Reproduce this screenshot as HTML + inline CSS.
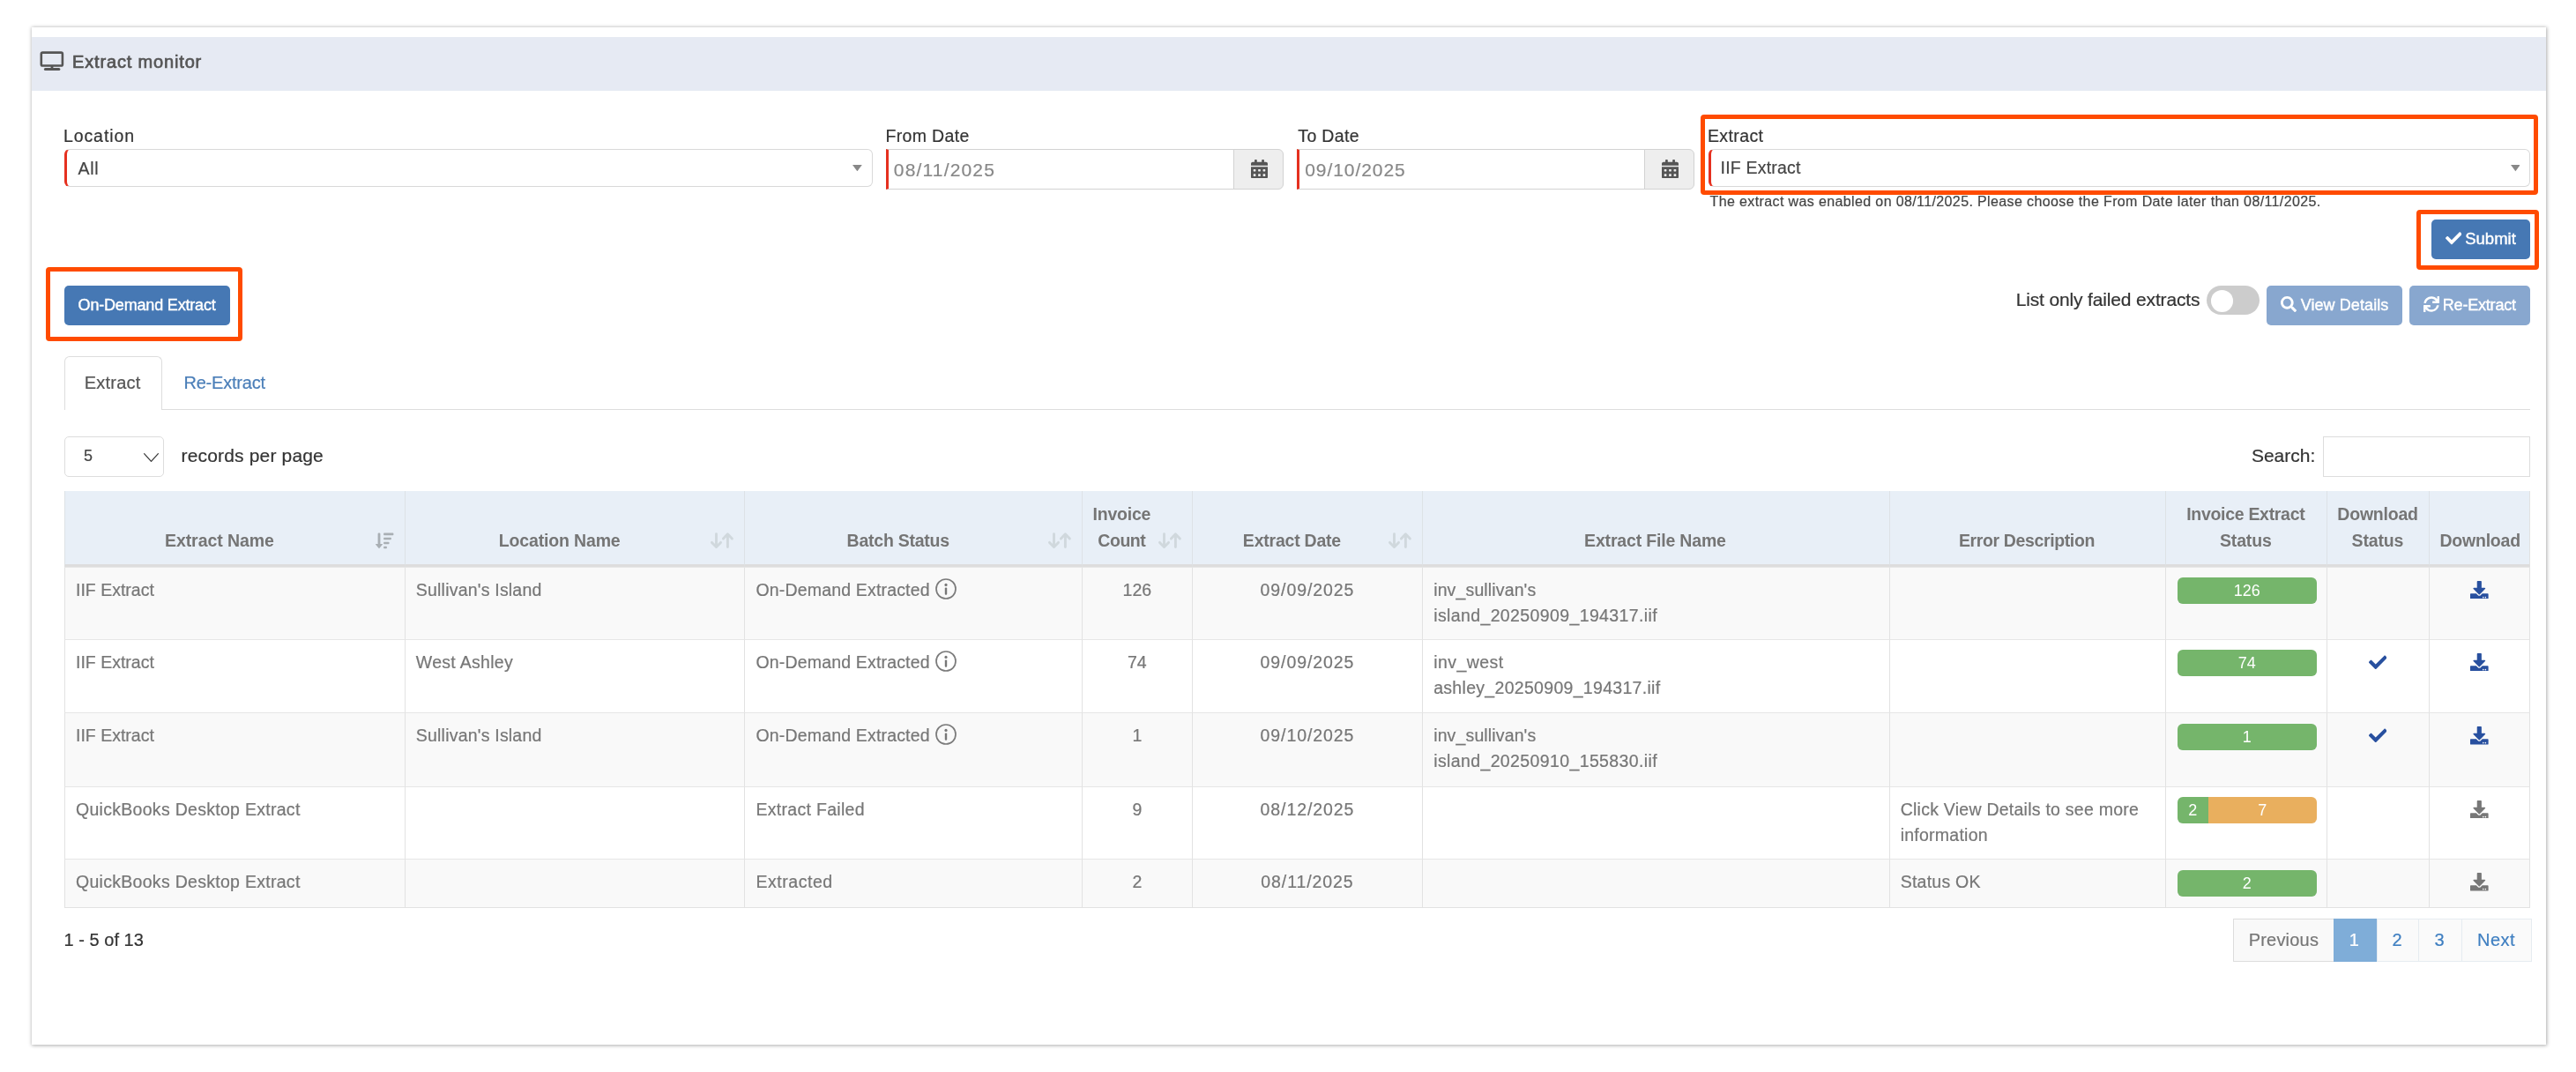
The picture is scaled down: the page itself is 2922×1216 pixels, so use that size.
<!DOCTYPE html>
<html><head><meta charset="utf-8"><title>Extract monitor</title>
<style>
html,body{margin:0;padding:0;background:#fff;}
body{will-change:transform;width:2922px;height:1216px;position:relative;overflow:hidden;font-family:"Liberation Sans",sans-serif;}
.b{position:absolute;box-sizing:border-box;display:block;}
.t{position:absolute;white-space:nowrap;}
table{position:absolute;border-collapse:separate;border-spacing:0;table-layout:fixed;font-size:19.5px;line-height:29px;color:#777;}
th,td{box-sizing:border-box;padding:11px 12px;border-left:1.5px solid #e2e2e2;border-top:1.5px solid #e6e6e6;vertical-align:top;text-align:left;overflow:hidden;position:relative;}
th{background:#e8eff7;vertical-align:bottom;line-height:29.5px;padding-bottom:11.7px;text-align:center;font-weight:bold;border-top:none;border-bottom:3px solid #ddd;border-left-color:#dde2e6;color:#757575;}
th{padding-left:11px;padding-right:13px;}
th.s{padding-right:46px;}
td.d{letter-spacing:0.9px;}
td.e{letter-spacing:0.25px;}
tr.o td{background:#f9f9f9;}
td.c{text-align:center;}
td{-webkit-text-stroke:0.22px #777;}
.pg{-webkit-text-stroke:0;}
th:last-child,td:last-child{border-right:1.5px solid #e2e2e2;}
tr:last-child td{border-bottom:1.5px solid #e2e2e2;}
.pg{position:absolute;left:12.5px;top:11.6px;height:30px;border-radius:6px;overflow:hidden;display:flex;color:#fff;font-size:18px;line-height:30px;text-align:center;box-shadow:inset 0 -1.5px 0 rgba(0,0,0,.12);}
.pg span{display:block;height:30px;}
.g{background:#75b56b;}.w{background:#e9af5e;}

tr.r1 .pg{top:10.8px;}

</style></head>
<body>
<div class="b " style="left:36.0px;top:31.0px;width:2852.0px;height:1153.5px;background:#fff;box-shadow:0 0 4px 0.5px rgba(0,0,0,.33);"></div>
<div class="b " style="left:36.0px;top:42.0px;width:2852.0px;height:61.3px;background:#e6eaf3;"></div>
<svg class="b" style="left:44.0px;top:57.0px;" width="30.0" height="25.0" viewBox="0 0 30 25"><rect x="2.8" y="2.6" width="24.1" height="14.9" rx="1.6" ry="1.6" fill="none" stroke="#555" stroke-width="2.6"/><rect x="13.6" y="18" width="2.8" height="3" fill="#555"/><rect x="5.9" y="20" width="18.5" height="3.1" rx="1.5" fill="#555"/></svg>
<div class="t " style="left:82.1px;top:60.1px;font-size:20px;line-height:20px;color:#555;letter-spacing:0.836px;-webkit-text-stroke:0.7px #555;">Extract monitor</div>
<div class="t " style="left:71.9px;top:144.7px;font-size:19.5px;line-height:19.5px;color:#333;letter-spacing:0.931px;-webkit-text-stroke:0.2px #333;">Location</div>
<div class="t " style="left:1004.4px;top:144.7px;font-size:19.5px;line-height:19.5px;color:#333;letter-spacing:0.350px;-webkit-text-stroke:0.2px #333;">From Date</div>
<div class="t " style="left:1472.3px;top:144.7px;font-size:19.5px;line-height:19.5px;color:#333;letter-spacing:0.332px;-webkit-text-stroke:0.2px #333;">To Date</div>
<div class="t " style="left:1936.9px;top:144.7px;font-size:19.5px;line-height:19.5px;color:#333;letter-spacing:0.402px;-webkit-text-stroke:0.2px #333;">Extract</div>
<div class="b " style="left:73.0px;top:169.2px;width:916.7px;height:42.7px;background:#fff;border:1.5px solid #d9d9d9;border-left:3px solid #e5301f;border-radius:6px;"></div>
<div class="t " style="left:88.6px;top:181.5px;font-size:19.5px;line-height:19.5px;color:#444;letter-spacing:0.612px;-webkit-text-stroke:0.2px #444;">All</div>
<svg class="b" style="left:967.4px;top:187.1px;" width="10.8" height="7.3" viewBox="0 0 10.8 7.3"><path d="M0 0h10.800L5.400 7.300z" fill="#888"/></svg>
<div class="b " style="left:1005.0px;top:169.2px;width:395.3px;height:45.5px;background:#fff;border-top:1.5px solid #d2d2d2;border-bottom:1.5px solid #d2d2d2;border-left:3px solid #e5301f;"></div>
<div class="b " style="left:1399.3px;top:169.2px;width:56.8px;height:45.5px;background:#eee;border:1.5px solid #d2d2d2;border-radius:0 6px 6px 0;"></div>
<svg class="b" style="left:1418.7px;top:180.6px;" width="19.0" height="21.8" viewBox="0 0 448 512"><path fill="#555" d="M0 464c0 26.500 21.500 48 48 48h352c26.500 0 48-21.500 48-48V192H0v272zm320-196c0-6.600 5.400-12 12-12h40c6.600 0 12 5.400 12 12v40c0 6.600-5.400 12-12 12h-40c-6.600 0-12-5.400-12-12v-40zm0 128c0-6.600 5.400-12 12-12h40c6.600 0 12 5.400 12 12v40c0 6.600-5.400 12-12 12h-40c-6.600 0-12-5.400-12-12v-40zM192 268c0-6.600 5.400-12 12-12h40c6.600 0 12 5.400 12 12v40c0 6.600-5.400 12-12 12h-40c-6.600 0-12-5.400-12-12v-40zm0 128c0-6.600 5.400-12 12-12h40c6.600 0 12 5.400 12 12v40c0 6.600-5.400 12-12 12h-40c-6.600 0-12-5.400-12-12v-40zM64 268c0-6.600 5.400-12 12-12h40c6.600 0 12 5.400 12 12v40c0 6.600-5.400 12-12 12H76c-6.600 0-12-5.400-12-12v-40zm0 128c0-6.600 5.400-12 12-12h40c6.600 0 12 5.400 12 12v40c0 6.600-5.400 12-12 12H76c-6.600 0-12-5.400-12-12v-40zM400 64h-48V16c0-8.800-7.200-16-16-16h-32c-8.800 0-16 7.200-16 16v48H160V16c0-8.800-7.200-16-16-16h-32c-8.800 0-16 7.200-16 16v48H48C21.500 64 0 85.500 0 112v48h448v-48c0-26.500-21.500-48-48-48z"/></svg>
<div class="t " style="left:1013.8px;top:182.2px;font-size:21px;line-height:21px;color:#888;letter-spacing:1.172px;-webkit-text-stroke:0.2px #888;">08/11/2025</div>
<div class="b " style="left:1471.3px;top:169.2px;width:394.7px;height:45.5px;background:#fff;border-top:1.5px solid #d2d2d2;border-bottom:1.5px solid #d2d2d2;border-left:3px solid #e5301f;"></div>
<div class="b " style="left:1865.0px;top:169.2px;width:57.0px;height:45.5px;background:#eee;border:1.5px solid #d2d2d2;border-radius:0 6px 6px 0;"></div>
<svg class="b" style="left:1884.5px;top:180.6px;" width="19.0" height="21.8" viewBox="0 0 448 512"><path fill="#555" d="M0 464c0 26.500 21.500 48 48 48h352c26.500 0 48-21.500 48-48V192H0v272zm320-196c0-6.600 5.400-12 12-12h40c6.600 0 12 5.400 12 12v40c0 6.600-5.400 12-12 12h-40c-6.600 0-12-5.400-12-12v-40zm0 128c0-6.600 5.400-12 12-12h40c6.600 0 12 5.400 12 12v40c0 6.600-5.400 12-12 12h-40c-6.600 0-12-5.400-12-12v-40zM192 268c0-6.600 5.400-12 12-12h40c6.600 0 12 5.400 12 12v40c0 6.600-5.400 12-12 12h-40c-6.600 0-12-5.400-12-12v-40zm0 128c0-6.600 5.400-12 12-12h40c6.600 0 12 5.400 12 12v40c0 6.600-5.400 12-12 12h-40c-6.600 0-12-5.400-12-12v-40zM64 268c0-6.600 5.400-12 12-12h40c6.600 0 12 5.400 12 12v40c0 6.600-5.400 12-12 12H76c-6.600 0-12-5.400-12-12v-40zm0 128c0-6.600 5.400-12 12-12h40c6.600 0 12 5.400 12 12v40c0 6.600-5.400 12-12 12H76c-6.600 0-12-5.400-12-12v-40zM400 64h-48V16c0-8.800-7.200-16-16-16h-32c-8.800 0-16 7.200-16 16v48H160V16c0-8.800-7.200-16-16-16h-32c-8.800 0-16 7.200-16 16v48H48C21.500 64 0 85.500 0 112v48h448v-48c0-26.500-21.500-48-48-48z"/></svg>
<div class="t " style="left:1480.2px;top:182.2px;font-size:21px;line-height:21px;color:#888;letter-spacing:0.941px;-webkit-text-stroke:0.2px #888;">09/10/2025</div>
<div class="b " style="left:1937.8px;top:169.0px;width:932.2px;height:42.8px;background:#fff;border:1.5px solid #d9d9d9;border-left:3px solid #e5301f;border-radius:6px;"></div>
<div class="t " style="left:1951.6px;top:181.1px;font-size:19.5px;line-height:19.5px;color:#444;letter-spacing:0.193px;-webkit-text-stroke:0.2px #444;">IIF Extract</div>
<svg class="b" style="left:2847.6px;top:187.4px;" width="10.8" height="7.3" viewBox="0 0 10.8 7.3"><path d="M0 0h10.800L5.400 7.300z" fill="#888"/></svg>
<div class="t " style="left:1939.5px;top:220.7px;font-size:16px;line-height:16px;color:#444;letter-spacing:0.379px;-webkit-text-stroke:0.2px #444;">The extract was enabled on 08/11/2025. Please choose the From Date later than 08/11/2025.</div>
<div class="b " style="left:1928.5px;top:130.4px;width:950.5px;height:90.9px;border:5px solid #ff4b00;border-radius:4px;"></div>
<div class="b " style="left:2741.3px;top:238.0px;width:139.2px;height:67.6px;border:5px solid #ff4b00;border-radius:4px;"></div>
<div class="b " style="left:52.0px;top:303.0px;width:223.0px;height:84.0px;border:5px solid #ff4b00;border-radius:4px;"></div>
<div class="b " style="left:2757.5px;top:249.2px;width:112.5px;height:45.1px;background:#4678b4;border-radius:5px;"></div>
<svg class="b" style="left:2773.8px;top:261.2px;" width="18.5" height="18.5" viewBox="0 0 512 512"><path fill="#fff" d="M173.898 439.404l-166.400-166.400c-9.997-9.997-9.997-26.206 0-36.204l36.203-36.204c9.997-9.998 26.207-9.998 36.204 0L192 312.690 432.095 72.596c9.997-9.997 26.207-9.997 36.204 0l36.203 36.204c9.997 9.997 9.997 26.206 0 36.204l-294.400 294.401c-9.998 9.997-26.207 9.997-36.204-.001z"/></svg>
<div class="t " style="left:2796.2px;top:261.8px;font-size:18.5px;line-height:18.5px;color:#fff;letter-spacing:0.020px;-webkit-text-stroke:0.4px #fff;">Submit</div>
<div class="b " style="left:72.7px;top:324.0px;width:188.6px;height:45.3px;background:#4678b4;border-radius:5px;"></div>
<div class="t " style="left:88.6px;top:336.9px;font-size:18px;line-height:18px;color:#fff;letter-spacing:-0.182px;-webkit-text-stroke:0.4px #fff;">On-Demand Extract</div>
<div class="t " style="left:2286.7px;top:328.5px;font-size:21px;line-height:21px;color:#333;letter-spacing:-0.150px;-webkit-text-stroke:0.2px #333;">List only failed extracts</div>
<div class="b " style="left:2502.5px;top:324.3px;width:60.9px;height:33.1px;background:#ccc;border-radius:17px;"></div>
<div class="b " style="left:2508.0px;top:329.0px;width:25.3px;height:24.6px;background:#fff;border-radius:50%;"></div>
<div class="b " style="left:2570.8px;top:324.3px;width:154.5px;height:44.7px;background:#88a7cf;border-radius:5px;"></div>
<svg class="b" style="left:2586.8px;top:336.4px;" width="18.0" height="18.0" viewBox="0 0 512 512"><path fill="#fff" d="M505 442.700L405.300 343c-4.500-4.500-10.600-7-17-7H372c27.600-35.300 44-79.700 44-128C416 93.100 322.900 0 208 0S0 93.100 0 208s93.100 208 208 208c48.300 0 92.700-16.400 128-44v16.300c0 6.400 2.500 12.500 7 17l99.700 99.700c9.400 9.400 24.600 9.400 33.900 0l28.300-28.300c9.400-9.400 9.400-24.600.1-34zM208 336c-70.700 0-128-57.200-128-128 0-70.700 57.200-128 128-128 70.700 0 128 57.200 128 128 0 70.700-57.200 128-128 128z"/></svg>
<div class="t " style="left:2609.7px;top:336.8px;font-size:18px;line-height:18px;color:#fff;letter-spacing:0.082px;-webkit-text-stroke:0.4px #fff;">View Details</div>
<div class="b " style="left:2732.6px;top:324.3px;width:137.6px;height:44.7px;background:#88a7cf;border-radius:5px;"></div>
<svg class="b" style="left:2749.0px;top:336.4px;" width="18.0" height="18.0" viewBox="0 0 512 512"><path fill="#fff" d="M440.650 12.570l4 82.770A247.160 247.160 0 0 0 255.830 8C134.730 8 33.910 94.920 12.290 209.820A12 12 0 0 0 24.090 224h49.050a12 12 0 0 0 11.670-9.260 175.910 175.910 0 0 1 317-56.940l-101.460-4.860a12 12 0 0 0-12.570 12v47.410a12 12 0 0 0 12 12H500a12 12 0 0 0 12-12V12a12 12 0 0 0-12-12h-47.370a12 12 0 0 0-11.980 12.570zM255.830 432a175.610 175.610 0 0 1-146-77.800l101.800 4.870a12 12 0 0 0 12.570-12v-47.400a12 12 0 0 0-12-12H12a12 12 0 0 0-12 12V500a12 12 0 0 0 12 12h47.350a12 12 0 0 0 12-12.600l-4.150-82.570A247.170 247.170 0 0 0 255.830 504c121.110 0 221.930-86.920 243.550-201.820a12 12 0 0 0-11.800-14.180h-49.050a12 12 0 0 0-11.670 9.260A175.860 175.860 0 0 1 255.830 432z"/></svg>
<div class="t " style="left:2770.8px;top:336.8px;font-size:18px;line-height:18px;color:#fff;letter-spacing:-0.202px;-webkit-text-stroke:0.4px #fff;">Re-Extract</div>
<div class="b " style="left:183.0px;top:463.6px;width:2687.0px;height:1.5px;background:#ddd;"></div>
<div class="b " style="left:73.0px;top:404.0px;width:110.8px;height:61.1px;background:#fff;border:1.5px solid #ddd;border-bottom:none;border-radius:6px 6px 0 0;"></div>
<div class="t " style="left:95.7px;top:424.1px;font-size:20px;line-height:20px;color:#555;letter-spacing:0.233px;-webkit-text-stroke:0.2px #555;">Extract</div>
<div class="t " style="left:208.4px;top:424.1px;font-size:20px;line-height:20px;color:#4a7eb8;letter-spacing:-0.200px;-webkit-text-stroke:0.2px #4a7eb8;">Re-Extract</div>
<div class="b " style="left:73.0px;top:495.0px;width:113.0px;height:46.0px;background:#fff;border:1.5px solid #ddd;border-radius:5px;"></div>
<div class="t " style="left:95.1px;top:508.2px;font-size:18px;line-height:18px;color:#444;-webkit-text-stroke:0.2px #444;">5</div>
<svg class="b" style="left:162.0px;top:512.5px;" width="19.0" height="12.5" viewBox="0 0 19 12.5"><path d="M1.600 1.700L9.500 10.400L17.400 1.700" fill="none" stroke="#3a3a3a" stroke-width="1.25" stroke-linecap="round" stroke-linejoin="round"/></svg>
<div class="t " style="left:205.6px;top:505.8px;font-size:21px;line-height:21px;color:#333;letter-spacing:0.163px;-webkit-text-stroke:0.2px #333;">records per page</div>
<div class="t " style="left:2553.9px;top:506.4px;font-size:21px;line-height:21px;color:#333;letter-spacing:-0.003px;-webkit-text-stroke:0.2px #333;">Search:</div>
<div class="b " style="left:2635.0px;top:495.0px;width:235.0px;height:46.0px;background:#fff;border:1.5px solid #ddd;"></div>
<div class="t " style="left:72.5px;top:1056.4px;font-size:20px;line-height:20px;color:#333;letter-spacing:0.030px;-webkit-text-stroke:0.2px #333;">1 - 5 of 13</div>
<div class="b " style="left:2533.0px;top:1042.0px;width:115.5px;height:49.2px;border:1.5px solid #ddd;background:#f9f9f9;"></div>
<div class="t " style="left:2550.7px;top:1055.9px;font-size:20px;line-height:20px;color:#777;letter-spacing:0.200px;-webkit-text-stroke:0.2px #777;">Previous</div>
<div class="b " style="left:2647.3px;top:1042.0px;width:49.9px;height:49.2px;background:#7fadd8;"></div>
<div class="t " style="left:2664.8px;top:1055.9px;font-size:20px;line-height:20px;color:#fff;-webkit-text-stroke:0.2px #fff;">1</div>
<div class="b " style="left:2696.2px;top:1042.0px;width:48.4px;height:49.2px;border:1.5px solid #e6ecf1;background:#fafafa;"></div>
<div class="t " style="left:2713.4px;top:1055.9px;font-size:20px;line-height:20px;color:#3f7fc1;-webkit-text-stroke:0.2px #3f7fc1;">2</div>
<div class="b " style="left:2743.1px;top:1042.0px;width:49.9px;height:49.2px;border:1.5px solid #e6ecf1;background:#fafafa;"></div>
<div class="t " style="left:2761.6px;top:1055.9px;font-size:20px;line-height:20px;color:#3f7fc1;-webkit-text-stroke:0.2px #3f7fc1;">3</div>
<div class="b " style="left:2791.5px;top:1042.0px;width:80.8px;height:49.2px;border:1.5px solid #e6ecf1;background:#fafafa;"></div>
<div class="t " style="left:2810.0px;top:1055.9px;font-size:20px;line-height:20px;color:#3f7fc1;letter-spacing:0.500px;-webkit-text-stroke:0.2px #3f7fc1;">Next</div>
<table style="left:73px;top:557px;width:2797px">
<colgroup><col style="width:385.8px"><col style="width:385.7px"><col style="width:382.5px"><col style="width:124.7px"><col style="width:261.5px"><col style="width:529.5px"><col style="width:313.6px"><col style="width:183.1px"><col style="width:116.1px"><col style="width:114.5px"></colgroup>
<tr style="height:86px"><th class="s"><span style="letter-spacing:-0.068px">Extract Name</span><svg class="b" style="right:11px;bottom:17px;overflow:visible" width="22" height="19" viewBox="0 0 22 19"><g fill="#a9afb4" stroke="none"><rect x="2.600" y="0.500" width="2.800" height="14" rx="1.200"/><path d="M0.600 12.900h6.800c0.500 0 0.700 0.500 0.400 0.900l-3.300 4c-0.300 0.300-0.700 0.300-1 0l-3.300-4c-0.300-0.400-0.100-0.900 0.400-0.900z"/><rect x="9.100" y="0.600" width="11.300" height="2.600" rx="0.800"/><rect x="9.100" y="5.700" width="8.700" height="2.600" rx="0.800"/><rect x="9.100" y="10.700" width="6.400" height="2.600" rx="0.800"/><rect x="9.100" y="15.700" width="3.800" height="2.600" rx="0.800"/></g></svg></th><th class="s"><span style="letter-spacing:-0.155px">Location Name</span><svg class="b" style="right:11px;bottom:17px" width="28" height="20" viewBox="0 0 28 20"><g fill="none" stroke="#d0d8dd" stroke-width="2.900" stroke-linecap="round" stroke-linejoin="round"><path d="M7.500 2.600V17.200M2.500 12.400L7.500 17.500L12.500 12.400"/><path d="M20.400 17.600V3M15.400 7.900L20.400 2.800L25.400 7.900"/></g></svg></th><th class="s"><span style="letter-spacing:-0.245px">Batch Status</span><svg class="b" style="right:11px;bottom:17px" width="28" height="20" viewBox="0 0 28 20"><g fill="none" stroke="#d0d8dd" stroke-width="2.900" stroke-linecap="round" stroke-linejoin="round"><path d="M7.500 2.600V17.200M2.500 12.400L7.500 17.500L12.500 12.400"/><path d="M20.400 17.600V3M15.400 7.900L20.400 2.800L25.400 7.900"/></g></svg></th><th class="s"><span style="letter-spacing:-0.221px">Invoice</span><br><span style="letter-spacing:-0.445px">Count</span><svg class="b" style="right:11px;bottom:17px" width="28" height="20" viewBox="0 0 28 20"><g fill="none" stroke="#d0d8dd" stroke-width="2.900" stroke-linecap="round" stroke-linejoin="round"><path d="M7.500 2.600V17.200M2.500 12.400L7.500 17.500L12.500 12.400"/><path d="M20.400 17.600V3M15.400 7.900L20.400 2.800L25.400 7.900"/></g></svg></th><th class="s"><span style="letter-spacing:-0.221px">Extract Date</span><svg class="b" style="right:11px;bottom:17px" width="28" height="20" viewBox="0 0 28 20"><g fill="none" stroke="#d0d8dd" stroke-width="2.900" stroke-linecap="round" stroke-linejoin="round"><path d="M7.500 2.600V17.200M2.500 12.400L7.500 17.500L12.500 12.400"/><path d="M20.400 17.600V3M15.400 7.900L20.400 2.800L25.400 7.900"/></g></svg></th><th class=""><span style="letter-spacing:-0.172px">Extract File Name</span></th><th class=""><span style="letter-spacing:-0.372px">Error Description</span></th><th class=""><span style="letter-spacing:-0.306px">Invoice Extract</span><br><span style="letter-spacing:-0.141px">Status</span></th><th class=""><span style="letter-spacing:-0.225px">Download</span><br><span style="letter-spacing:-0.141px">Status</span></th><th class=""><span style="letter-spacing:-0.225px">Download</span></th></tr>
<tr class="o r1" style="height:81.8px"><td class="">IIF Extract</td><td class=""><span style="letter-spacing:0.207px">Sullivan's Island</span></td><td class=""><span style="letter-spacing:0.168px">On-Demand Extracted</span><svg style="vertical-align:-4px;margin-left:6.5px" width="24" height="24" viewBox="0 0 24 24"><circle cx="12" cy="12" r="11" fill="none" stroke="#7b7b7b" stroke-width="1.7"/><circle cx="12" cy="7.400" r="1.600" fill="#777"/><rect x="10.800" y="10.600" width="2.400" height="8.200" rx="1" fill="#777"/></svg></td><td class="c">126</td><td class="c d">09/09/2025</td><td class="f"><span style="letter-spacing:0.137px">inv_sullivan's</span><br><span style="letter-spacing:0.381px">island_20250909_194317.iif</span></td><td class="e"></td><td class=""><div class="pg"><span class="g" style="width:158px">126</span></div></td><td class="c"></td><td class="c"><svg class="b" style="left:50%;margin-left:-10.3px;top:14.8px" width="20.6" height="20.6" viewBox="0 0 512 512"><path fill="#28509f" d="M216 0h80c13.300 0 24 10.700 24 24v168h87.700c17.800 0 26.700 21.500 14.100 34.100L269.700 378.300c-7.500 7.500-19.800 7.500-27.300 0L90.100 226.100c-12.600-12.600-3.700-34.100 14.100-34.100H192V24c0-13.300 10.700-24 24-24zm296 376v112c0 13.300-10.700 24-24 24H24c-13.300 0-24-10.700-24-24V376c0-13.300 10.700-24 24-24h146.700l49 49c20.100 20.100 52.500 20.100 72.600 0l49-49H488c13.300 0 24 10.700 24 24zm-124 88c0-11-9-20-20-20s-20 9-20 20 9 20 20 20 20-9 20-20zm64 0c0-11-9-20-20-20s-20 9-20 20 9 20 20 20 20-9 20-20z"/></svg></td></tr>
<tr class="e" style="height:83.4px"><td class="">IIF Extract</td><td class=""><span style="letter-spacing:0.304px">West Ashley</span></td><td class=""><span style="letter-spacing:0.168px">On-Demand Extracted</span><svg style="vertical-align:-4px;margin-left:6.5px" width="24" height="24" viewBox="0 0 24 24"><circle cx="12" cy="12" r="11" fill="none" stroke="#7b7b7b" stroke-width="1.7"/><circle cx="12" cy="7.400" r="1.600" fill="#777"/><rect x="10.800" y="10.600" width="2.400" height="8.200" rx="1" fill="#777"/></svg></td><td class="c">74</td><td class="c d">09/09/2025</td><td class="f"><span style="letter-spacing:0.430px">inv_west</span><br><span style="letter-spacing:0.303px">ashley_20250909_194317.iif</span></td><td class="e"></td><td class=""><div class="pg"><span class="g" style="width:158px">74</span></div></td><td class="c"><svg class="b" style="left:50%;margin-left:-11.2px;top:15px" width="20.6" height="20.6" viewBox="0 0 512 512"><path fill="#28509f" d="M173.898 439.404l-166.400-166.400c-9.997-9.997-9.997-26.206 0-36.204l36.203-36.204c9.997-9.998 26.207-9.998 36.204 0L192 312.690 432.095 72.596c9.997-9.997 26.207-9.997 36.204 0l36.203 36.204c9.997 9.997 9.997 26.206 0 36.204l-294.400 294.401c-9.998 9.997-26.207 9.997-36.204-.001z"/></svg></td><td class="c"><svg class="b" style="left:50%;margin-left:-10.3px;top:14.8px" width="20.6" height="20.6" viewBox="0 0 512 512"><path fill="#28509f" d="M216 0h80c13.300 0 24 10.700 24 24v168h87.700c17.800 0 26.700 21.500 14.100 34.100L269.700 378.300c-7.500 7.500-19.800 7.500-27.300 0L90.100 226.100c-12.600-12.600-3.700-34.100 14.100-34.100H192V24c0-13.300 10.700-24 24-24zm296 376v112c0 13.300-10.700 24-24 24H24c-13.300 0-24-10.700-24-24V376c0-13.300 10.700-24 24-24h146.700l49 49c20.100 20.100 52.500 20.100 72.600 0l49-49H488c13.300 0 24 10.700 24 24zm-124 88c0-11-9-20-20-20s-20 9-20 20 9 20 20 20 20-9 20-20zm64 0c0-11-9-20-20-20s-20 9-20 20 9 20 20 20 20-9 20-20z"/></svg></td></tr>
<tr class="o" style="height:83.7px"><td class="">IIF Extract</td><td class=""><span style="letter-spacing:0.207px">Sullivan's Island</span></td><td class=""><span style="letter-spacing:0.168px">On-Demand Extracted</span><svg style="vertical-align:-4px;margin-left:6.5px" width="24" height="24" viewBox="0 0 24 24"><circle cx="12" cy="12" r="11" fill="none" stroke="#7b7b7b" stroke-width="1.7"/><circle cx="12" cy="7.400" r="1.600" fill="#777"/><rect x="10.800" y="10.600" width="2.400" height="8.200" rx="1" fill="#777"/></svg></td><td class="c">1</td><td class="c d">09/10/2025</td><td class="f"><span style="letter-spacing:0.137px">inv_sullivan's</span><br><span style="letter-spacing:0.381px">island_20250910_155830.iif</span></td><td class="e"></td><td class=""><div class="pg"><span class="g" style="width:158px">1</span></div></td><td class="c"><svg class="b" style="left:50%;margin-left:-11.2px;top:15px" width="20.6" height="20.6" viewBox="0 0 512 512"><path fill="#28509f" d="M173.898 439.404l-166.400-166.400c-9.997-9.997-9.997-26.206 0-36.204l36.203-36.204c9.997-9.998 26.207-9.998 36.204 0L192 312.690 432.095 72.596c9.997-9.997 26.207-9.997 36.204 0l36.203 36.204c9.997 9.997 9.997 26.206 0 36.204l-294.400 294.401c-9.998 9.997-26.207 9.997-36.204-.001z"/></svg></td><td class="c"><svg class="b" style="left:50%;margin-left:-10.3px;top:14.8px" width="20.6" height="20.6" viewBox="0 0 512 512"><path fill="#28509f" d="M216 0h80c13.300 0 24 10.700 24 24v168h87.700c17.800 0 26.700 21.500 14.100 34.100L269.700 378.300c-7.500 7.500-19.800 7.500-27.300 0L90.100 226.100c-12.600-12.600-3.700-34.100 14.100-34.100H192V24c0-13.300 10.700-24 24-24zm296 376v112c0 13.300-10.700 24-24 24H24c-13.300 0-24-10.700-24-24V376c0-13.300 10.700-24 24-24h146.700l49 49c20.100 20.100 52.500 20.100 72.600 0l49-49H488c13.300 0 24 10.700 24 24zm-124 88c0-11-9-20-20-20s-20 9-20 20 9 20 20 20 20-9 20-20zm64 0c0-11-9-20-20-20s-20 9-20 20 9 20 20 20 20-9 20-20z"/></svg></td></tr>
<tr class="e" style="height:82.6px"><td class=""><span style="letter-spacing:0.289px">QuickBooks Desktop Extract</span></td><td class=""></td><td class=""><span style="letter-spacing:0.299px">Extract Failed</span></td><td class="c">9</td><td class="c d">08/12/2025</td><td class="f"></td><td class="e">Click View Details to see more<br>information</td><td class=""><div class="pg"><span class="g" style="width:35px">2</span><span class="w" style="width:123px">7</span></div></td><td class="c"></td><td class="c"><svg class="b" style="left:50%;margin-left:-10.3px;top:14.8px" width="20.6" height="20.6" viewBox="0 0 512 512"><path fill="#777" d="M216 0h80c13.300 0 24 10.700 24 24v168h87.700c17.800 0 26.700 21.500 14.100 34.100L269.700 378.300c-7.500 7.500-19.800 7.500-27.300 0L90.100 226.100c-12.600-12.600-3.700-34.100 14.100-34.100H192V24c0-13.300 10.700-24 24-24zm296 376v112c0 13.300-10.700 24-24 24H24c-13.300 0-24-10.700-24-24V376c0-13.300 10.700-24 24-24h146.700l49 49c20.100 20.100 52.500 20.100 72.600 0l49-49H488c13.300 0 24 10.700 24 24zm-124 88c0-11-9-20-20-20s-20 9-20 20 9 20 20 20 20-9 20-20zm64 0c0-11-9-20-20-20s-20 9-20 20 9 20 20 20 20-9 20-20z"/></svg></td></tr>
<tr class="o" style="height:55.7px"><td class=""><span style="letter-spacing:0.289px">QuickBooks Desktop Extract</span></td><td class=""></td><td class=""><span style="letter-spacing:0.543px">Extracted</span></td><td class="c">2</td><td class="c d">08/11/2025</td><td class="f"></td><td class="e">Status OK</td><td class=""><div class="pg"><span class="g" style="width:158px">2</span></div></td><td class="c"></td><td class="c"><svg class="b" style="left:50%;margin-left:-10.3px;top:14.8px" width="20.6" height="20.6" viewBox="0 0 512 512"><path fill="#777" d="M216 0h80c13.300 0 24 10.700 24 24v168h87.700c17.800 0 26.700 21.500 14.100 34.100L269.700 378.300c-7.500 7.500-19.800 7.500-27.300 0L90.100 226.100c-12.600-12.600-3.700-34.100 14.100-34.100H192V24c0-13.300 10.700-24 24-24zm296 376v112c0 13.300-10.700 24-24 24H24c-13.300 0-24-10.700-24-24V376c0-13.300 10.700-24 24-24h146.700l49 49c20.100 20.100 52.500 20.100 72.600 0l49-49H488c13.300 0 24 10.700 24 24zm-124 88c0-11-9-20-20-20s-20 9-20 20 9 20 20 20 20-9 20-20zm64 0c0-11-9-20-20-20s-20 9-20 20 9 20 20 20 20-9 20-20z"/></svg></td></tr>
</table>
</body></html>
